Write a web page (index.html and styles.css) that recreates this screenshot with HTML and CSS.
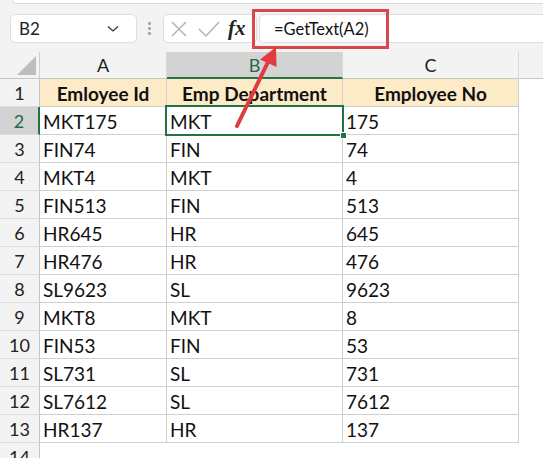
FILE: index.html
```html
<!DOCTYPE html>
<html>
<head>
<meta charset="utf-8">
<link rel="stylesheet" href="styles.css">
</head>
<body>
<div class="app">
  <div class="top">
    <div class="ribbon-edge"></div>
    <div class="fbar">
      <div class="namebox">
        <span>B2</span>
        <svg class="chev" width="12" height="8" viewBox="0 0 12 8"><path d="M1 1.5 L6 6 L11 1.5" fill="none" stroke="#333" stroke-width="1.3"/></svg>
      </div>
      <div class="dots"><i></i><i></i><i></i></div>
      <div class="fxbox">
        <svg width="18" height="18" viewBox="0 0 18 18"><path d="M2 2 L16 16 M16 2 L2 16" stroke="#b4b4b4" stroke-width="1.5" fill="none"/></svg>
        <svg width="22" height="18" viewBox="0 0 22 18"><path d="M1 9 L8 16 L21 2" stroke="#b4b4b4" stroke-width="1.5" fill="none"/></svg>
        <span class="fx">fx</span>
      </div>
      <div class="finput">=GetText(A2)</div>
    </div>
    <div class="redbox"></div>
  </div>

  <div class="sheet">
    <div class="row hdr">
      <div class="corner"><span class="tri"></span></div>
      <div class="ch">A</div>
      <div class="ch sel">B</div>
      <div class="ch">C</div>
      <div class="ch last"></div>
    </div>
    <div class="row">
      <div class="rh">1</div>
      <div class="c th">Emloyee Id</div>
      <div class="c th">Emp Department</div>
      <div class="c th">Employee No</div>
      <div class="c e"></div>
    </div>
    <div class="row">
      <div class="rh rsel">2</div>
      <div class="c">MKT175</div>
      <div class="c active">MKT<span class="handle"></span></div>
      <div class="c">175</div>
      <div class="c e"></div>
    </div>
    <div class="row"><div class="rh">3</div><div class="c">FIN74</div><div class="c">FIN</div><div class="c">74</div><div class="c e"></div></div>
    <div class="row"><div class="rh">4</div><div class="c">MKT4</div><div class="c">MKT</div><div class="c">4</div><div class="c e"></div></div>
    <div class="row"><div class="rh">5</div><div class="c">FIN513</div><div class="c">FIN</div><div class="c">513</div><div class="c e"></div></div>
    <div class="row"><div class="rh">6</div><div class="c">HR645</div><div class="c">HR</div><div class="c">645</div><div class="c e"></div></div>
    <div class="row"><div class="rh">7</div><div class="c">HR476</div><div class="c">HR</div><div class="c">476</div><div class="c e"></div></div>
    <div class="row"><div class="rh">8</div><div class="c">SL9623</div><div class="c">SL</div><div class="c">9623</div><div class="c e"></div></div>
    <div class="row"><div class="rh">9</div><div class="c">MKT8</div><div class="c">MKT</div><div class="c">8</div><div class="c e"></div></div>
    <div class="row"><div class="rh">10</div><div class="c">FIN53</div><div class="c">FIN</div><div class="c">53</div><div class="c e"></div></div>
    <div class="row"><div class="rh">11</div><div class="c">SL731</div><div class="c">SL</div><div class="c">731</div><div class="c e"></div></div>
    <div class="row"><div class="rh">12</div><div class="c">SL7612</div><div class="c">SL</div><div class="c">7612</div><div class="c e"></div></div>
    <div class="row"><div class="rh">13</div><div class="c">HR137</div><div class="c">HR</div><div class="c">137</div><div class="c e"></div></div>
    <div class="row blank"><div class="rh">14</div><div class="c n"></div><div class="c n"></div><div class="c n"></div><div class="c e"></div></div>
  </div>

  <svg class="arrow" width="543" height="458" viewBox="0 0 543 458">
    <line x1="237" y1="126" x2="268" y2="62" stroke="#e23b3f" stroke-width="4" stroke-linecap="round"/>
    <polygon points="276,47 276.5,67 260,59.5" fill="#e23b3f"/>
  </svg>
</div>
</body>
</html>
```

FILE: styles.css
```css
* { box-sizing: border-box; }
html, body { margin: 0; padding: 0; }
body {
  width: 543px;
  height: 458px;
  overflow: hidden;
  background: #ffffff;
  font-family: "Lato", "Liberation Sans", sans-serif;
  color: #111;
}
.app { position: relative; width: 543px; height: 458px; }

.top {
  position: relative;
  height: 52px;
  background: #f3f3f3;
}
.ribbon-edge {
  height: 4px;
  margin-left: 12px;
  background: #fff;
  border: 1px solid #dadada;
  border-top: none;
  border-right: none;
  border-bottom-left-radius: 8px;
}
.fbar {
  display: flex;
  align-items: center;
  margin-top: 10px;
  height: 29px;
}
.namebox {
  margin-left: 10px;
  width: 127px;
  height: 29px;
  background: #fff;
  border: 1px solid #dedede;
  border-radius: 5px;
  display: flex;
  align-items: center;
  justify-content: space-between;
  padding: 0 17px 0 8px;
  font-size: 17px;
  color: #222;
}
.chev { margin-top: 1px; }
.dots {
  margin-left: 11px;
  width: 3px;
  display: flex;
  flex-direction: column;
  gap: 2px;
}
.dots i { display: block; width: 3px; height: 3px; background: #a8a8a8; border-radius: 1px; }
.fxbox {
  margin-left: 12px;
  width: 94px;
  height: 29px;
  background: #fff;
  border: 1px solid #dedede;
  border-radius: 5px;
  display: flex;
  align-items: center;
  padding-left: 6px;
  gap: 10px;
}
.fx {
  font-family: "Liberation Serif", "DejaVu Serif", serif;
  font-style: italic;
  font-weight: 700;
  font-size: 21px;
  color: #222;
  margin-left: -2px;
  letter-spacing: 0px;
  line-height: 1;
}
.finput {
  margin-left: 2px;
  flex: 1;
  height: 29px;
  background: #fff;
  border: 1px solid #dedede;
  border-right: none;
  border-radius: 5px 0 0 5px;
  padding-left: 14px;
  display: flex;
  align-items: center;
  font-size: 16.5px;
  color: #111;
}
.redbox {
  position: absolute;
  left: 252px;
  top: 9px;
  width: 137px;
  height: 40px;
  border: 3px solid #d9474b;
}

.row {
  display: grid;
  grid-template-columns: 40px 127px 176px 176px 1fr;
  height: 28px;
}
.row > div {
  border-right: 1px solid #cfcfcf;
  border-bottom: 1px solid #cfcfcf;
}
.hdr { height: 27px; background: #f3f3f3; }
.hdr > div { border-bottom: 1px solid #c6c6c6; }
.corner { position: relative; }
.tri {
  position: absolute;
  right: 3px;
  bottom: 3px;
  width: 0; height: 0;
  border-left: 19px solid transparent;
  border-bottom: 19px solid #bdbdbd;
}
.ch {
  display: flex;
  align-items: center;
  justify-content: center;
  font-size: 18px;
  color: #222;
  border-right-color: #d8d8d8 !important;
}
.ch.sel {
  background: #d3d3d3;
  color: #1f6b44;
  border-bottom: 2px solid #217346 !important;
}
.ch.last { border-right: none !important; }

.rh {
  background: #f3f3f3;
  display: flex;
  align-items: center;
  justify-content: center;
  font-size: 18px;
  color: #222;
  border-right-color: #c6c6c6 !important;
  border-bottom-color: #dcdcdc !important;
}
.rh.rsel {
  background: #d3d3d3;
  color: #1f6b44;
  border-right: 2px solid #217346 !important;
}
.c {
  display: flex;
  align-items: center;
  padding-left: 3px;
  padding-top: 2px;
  font-size: 19px;
  color: #111;
  white-space: nowrap;
  position: relative;
}
.c.th {
  background: #fdebc8;
  font-weight: 700;
  justify-content: center;
  padding-left: 0;
}
.c.e { border-right: none !important; border-bottom: none !important; }
.c.n { border-right: none !important; border-bottom: none !important; }
.active { z-index: 2; }
.active::after {
  content: "";
  position: absolute;
  left: -2px; top: -2px; right: -2px; bottom: -2px;
  border: 2px solid #217346;
  pointer-events: none;
}
.handle {
  position: absolute;
  right: -5px;
  bottom: -5px;
  width: 7px;
  height: 7px;
  background: #217346;
  border: 1px solid #fff;
  z-index: 3;
}
.arrow { position: absolute; left: 0; top: 0; pointer-events: none; z-index: 5; }
```
